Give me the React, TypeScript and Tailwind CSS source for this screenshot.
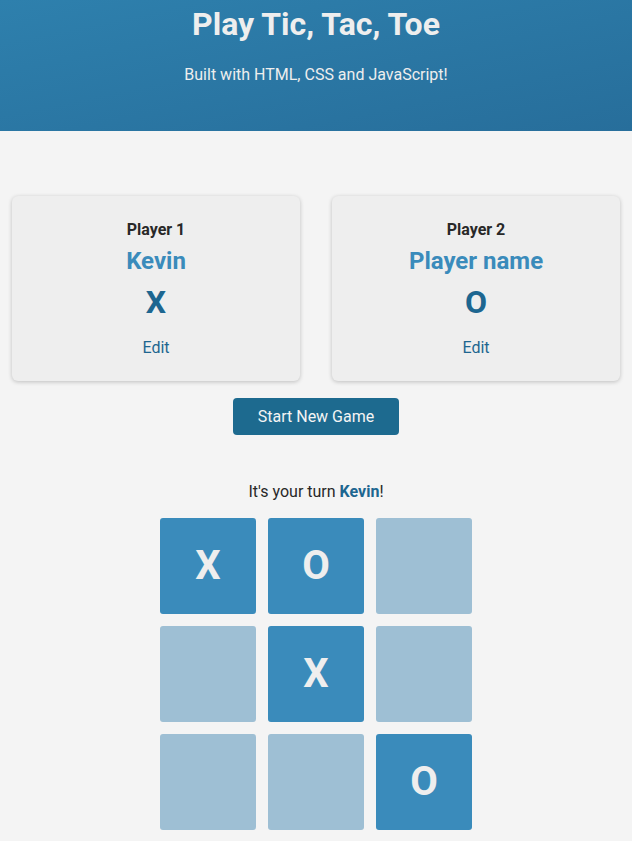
import React from "react";

const board: string[] = ["X", "O", "", "", "X", "", "", "", "O"];

function PlayerCard({ label, name, symbol }: { label: string; name: string; symbol: string }) {
  return (
    <div className="flex flex-col items-center rounded-md bg-[#eeeeee] pt-[22px] pb-[21px] shadow-[0_1px_4px_rgba(0,0,0,0.22)]">
      <h2 className="text-base font-bold leading-6 text-[#282828]">{label}</h2>
      <h3 className="mt-[3px] text-2xl font-bold leading-8 text-[#3a8bbb]">{name}</h3>
      <p className="mt-[5px] text-[32px] font-bold leading-10 text-[#1d6690]">{symbol}</p>
      <button className="mt-[14px] text-base leading-6 text-[#1d6690]">Edit</button>
    </div>
  );
}

export default function App() {
  return (
    <div className="min-h-[841px] bg-[#f4f4f4] font-['Roboto',sans-serif]">
      <header className="flex h-[131px] flex-col items-center bg-gradient-to-br from-[#2e80ad] to-[#276e9b]">
        <h1 className="text-[32px] font-bold leading-[48px] text-[#eeeeee]">Play Tic, Tac, Toe</h1>
        <p className="mt-[15px] text-base leading-6 text-[#eeeeee]">Built with HTML, CSS and JavaScript!</p>
      </header>
      <main className="flex flex-col items-center">
        <section className="mt-[65px] grid w-full grid-cols-2 gap-8 px-3">
          <PlayerCard label="Player 1" name="Kevin" symbol="X" />
          <PlayerCard label="Player 2" name="Player name" symbol="O" />
        </section>
        <button className="mt-[17px] h-[37px] w-[166px] rounded bg-[#1d6a8f] text-base text-[#f4f4f4]">
          Start New Game
        </button>
        <p className="mt-[45px] text-base leading-6 text-[#282828]">
          It's your turn <span className="font-bold text-[#1d6690]">Kevin</span>!
        </p>
        <ol className="mt-[14px] grid grid-cols-[repeat(3,96px)] gap-3">
          {board.map((v, i) => (
            <li
              key={i}
              className={
                "flex h-24 w-24 items-center justify-center rounded-[3px] text-[40px] font-bold text-[#eeeeee] " +
                (v ? "bg-[#3a8bbb]" : "bg-[#9ebfd4]")
              }
            >
              {v}
            </li>
          ))}
        </ol>
      </main>
    </div>
  );
}
